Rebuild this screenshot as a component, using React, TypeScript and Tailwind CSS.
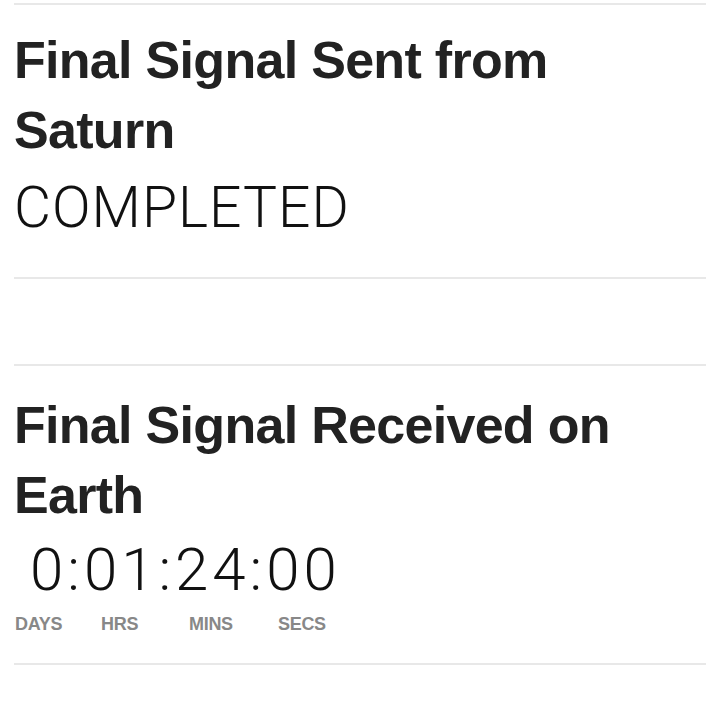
export default function App() {
  return (
    <div className="min-h-[701px] w-[720px] bg-white px-[14px] pt-[3px] text-[#222]" style={{ fontFamily: '"Liberation Sans", Arial, sans-serif' }}>
      <div className="h-[2px] bg-[#e8e8e8]" />
      <h2 className="mt-[20px] text-[52px] font-bold leading-[70px] tracking-[-0.7px]">Final Signal Sent from Saturn</h2>
      <div className="mt-[10px] text-[57px] font-light leading-[66px] tracking-[1px] text-[#111]" style={{ fontFamily: 'Roboto, sans-serif' }}>COMPLETED</div>
      <div className="mt-[36px] h-[2px] bg-[#e8e8e8]" />
      <div className="mt-[85px] h-[2px] bg-[#e8e8e8]" />
      <h2 className="mt-[24px] text-[52px] font-bold leading-[70px] tracking-[-0.7px]">Final Signal Received on Earth</h2>
      <div className="mt-[8px] pl-[16px] text-[60px] font-light leading-[64px] tracking-[4px] text-[#111]" style={{ fontFamily: 'Roboto, sans-serif' }}>0:01:24:00</div>
      <div className="mt-[12px] flex text-[18px] font-bold leading-[20px] tracking-[-0.3px] text-[#888]">
        <span className="w-[87px] pl-[1px]">DAYS</span>
        <span className="w-[88px]">HRS</span>
        <span className="w-[89px]">MINS</span>
        <span>SECS</span>
      </div>
      <div className="mt-[29px] h-[2px] bg-[#e8e8e8]" />
    </div>
  );
}
